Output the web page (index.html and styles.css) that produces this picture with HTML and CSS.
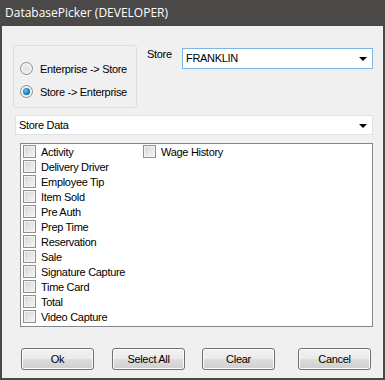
FILE: index.html
```html
<!DOCTYPE html>
<html lang="en">

<head>
    <meta charset="UTF-8">
    <title>DatabasePicker (DEVELOPER)</title>
    <link rel="stylesheet" href="styles.css">
</head>

<body>
    <div class="window">
        <div class="titlebar">DatabasePicker (DEVELOPER)</div>
        <div class="client">
            <div class="top">
                <div class="group">
                    <label class="radio"><span class="dot"></span>Enterprise -&gt; Store</label>
                    <label class="radio"><span class="dot on"></span>Store -&gt; Enterprise</label>
                </div>
                <div class="store-label">Store</div>
                <div class="combo combo-store">FRANKLIN<span class="arrow"></span></div>
            </div>
            <div class="combo combo-data">Store Data<span class="arrow"></span></div>
            <div class="list">
                <div class="col">
                    <label class="check"><span class="box"></span>Activity</label>
                    <label class="check"><span class="box"></span>Delivery Driver</label>
                    <label class="check"><span class="box"></span>Employee Tip</label>
                    <label class="check"><span class="box"></span>Item Sold</label>
                    <label class="check"><span class="box"></span>Pre Auth</label>
                    <label class="check"><span class="box"></span>Prep Time</label>
                    <label class="check"><span class="box"></span>Reservation</label>
                    <label class="check"><span class="box"></span>Sale</label>
                    <label class="check"><span class="box"></span>Signature Capture</label>
                    <label class="check"><span class="box"></span>Time Card</label>
                    <label class="check"><span class="box"></span>Total</label>
                    <label class="check"><span class="box"></span>Video Capture</label>
                </div>
                <div class="col">
                    <label class="check"><span class="box"></span>Wage History</label>
                </div>
            </div>
            <div class="buttons">
                <button class="btn btn-ok">Ok</button>
                <button class="btn btn-all">Select All</button>
                <button class="btn btn-clear">Clear</button>
                <button class="btn btn-cancel">Cancel</button>
            </div>
        </div>
    </div>
</body>

</html>
```

FILE: styles.css
```css
html * {
    padding: 0;
    margin: 0;
    border: 0;
    box-sizing: border-box;
}

body {
    width: 385px;
    height: 380px;
    font-family: "Liberation Sans", Arial, sans-serif;
    font-size: 11px;
    letter-spacing: -0.3px;
    color: #000;
}

.window {
    width: 385px;
    height: 380px;
    display: flex;
    flex-direction: column;
    background: #4b4947;
    padding: 0 2px 2px 2px;
}

.titlebar {
    height: 26px;
    line-height: 26px;
    padding-left: 3px;
    color: #fff;
    font-family: "Open Sans", "Noto Sans", sans-serif;
    font-size: 12px;
    letter-spacing: 0;
}

.client {
    flex: 1;
    background: #f0f0f0;
}

.top {
    display: flex;
    margin: 19px 0 0 11px;
    height: 63px;
}

.group {
    width: 124px;
    height: 63px;
    border: 1px solid #d5dfe5;
    border-radius: 3px;
    padding: 11px 0 0 6px;
}

.radio {
    display: flex;
    align-items: center;
    height: 23px;
}

.dot {
    width: 13px;
    height: 13px;
    border-radius: 50%;
    border: 1px solid #8e8f8f;
    background: radial-gradient(circle, #e6e6e6 30%, #f4f4f4 70%);
    margin-right: 7px;
    display: flex;
    align-items: center;
    justify-content: center;
}

.dot.on::after {
    content: "";
    width: 7px;
    height: 7px;
    border-radius: 50%;
    background: radial-gradient(circle at 40% 40%, #6ad0f5 0%, #1b8cc8 45%, #0c4a7a 100%);
}

.store-label {
    width: 35px;
    margin: 3px 0 0 10px;
}

.combo {
    position: relative;
    height: 21px;
    line-height: 19px;
    background: #fff;
    padding-left: 3px;
}

.combo-store {
    width: 191px;
    margin-top: 3px;
    border: 1px solid #7fb4e6;
}

.combo-data {
    width: 358px;
    height: 20px;
    line-height: 18px;
    margin: 7px 0 0 13px;
    border: 1px solid #e2e2e2;
}

.arrow {
    position: absolute;
    right: 5px;
    top: 8px;
    border-left: 4px solid transparent;
    border-right: 4px solid transparent;
    border-top: 4px solid #000;
}

.list {
    display: flex;
    width: 353px;
    height: 184px;
    margin: 8px 0 0 18px;
    border: 1px solid #828790;
    background: #fff;
    padding: 0 0 0 2px;
}

.col {
    width: 120px;
}

.check {
    display: flex;
    align-items: center;
    height: 15px;
}

.box {
    width: 13px;
    height: 13px;
    border: 1px solid #8f8f8f;
    background: linear-gradient(135deg, #d4d4d4, #f6f6f6);
    box-shadow: inset 0 0 0 1px #f4f4f4;
    margin-right: 5px;
}

.buttons {
    display: flex;
    margin: 21px 0 0 19px;
}

.btn {
    width: 73px;
    height: 22px;
    border: 1px solid #707070;
    border-radius: 3px;
    background: linear-gradient(#f2f2f2 0%, #ebebeb 48%, #dddddd 52%, #cfcfcf 100%);
    box-shadow: inset 0 0 0 1px #fbfbfb;
    font-family: "Liberation Sans", Arial, sans-serif;
    font-size: 11px;
    letter-spacing: -0.3px;
    color: #000;
}

.btn-all {
    margin-left: 18px;
}

.btn-clear {
    margin-left: 17px;
}

.btn-cancel {
    margin-left: 23px;
}
```
